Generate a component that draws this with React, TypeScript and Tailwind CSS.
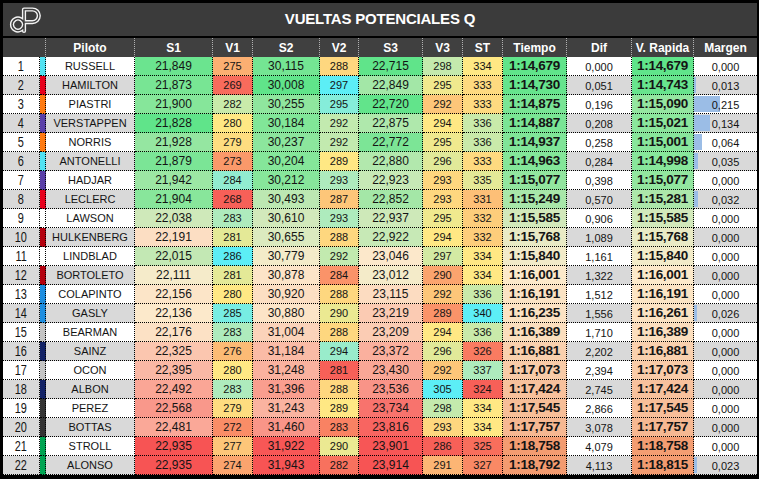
import React from 'react';

type RGB = [number, number, number];

const GREEN: RGB = [96, 228, 138];
const CREAM: RGB = [252, 235, 205];
const RED: RGB = [247, 84, 84];
const ORANGE: RGB = [243, 155, 112];
const SRED: RGB = [247, 96, 88];
const YELLOW: RGB = [255, 232, 132];
const CYAN: RGB = [92, 238, 246];

const TEAM: Record<string, string> = {
    mercedes: '#52e2f2',
    ferrari: '#e8001c',
    mclaren: '#ff7a12',
    redbull: '#5a3fa8',
    rb: '#ffffff',
    audi: '#b4000e',
    alpine: '#1e8ee0',
    haas: '#c4c4c4',
    williams: '#122266',
    cadillac: '#333333',
    aston: '#00a552',
};

// piloto, equipo, S1, V1, S2, V2, S3, V3, ST, tiempo, dif, v.rapida, margen
const ROWS: [string, string, string, number, string, number, string, number, number, string, string, string, string][] = [
    ['RUSSELL', 'mercedes', '21,849', 275, '30,115', 288, '22,715', 298, 334, '1:14,679', '0,000', '1:14,679', '0,000'],
    ['HAMILTON', 'ferrari', '21,873', 269, '30,008', 297, '22,849', 295, 333, '1:14,730', '0,051', '1:14,743', '0,013'],
    ['PIASTRI', 'mclaren', '21,900', 282, '30,255', 295, '22,720', 292, 333, '1:14,875', '0,196', '1:15,090', '0,215'],
    ['VERSTAPPEN', 'redbull', '21,828', 280, '30,184', 292, '22,875', 294, 336, '1:14,887', '0,208', '1:15,021', '0,134'],
    ['NORRIS', 'mclaren', '21,928', 279, '30,237', 292, '22,772', 295, 336, '1:14,937', '0,258', '1:15,001', '0,064'],
    ['ANTONELLI', 'mercedes', '21,879', 273, '30,204', 289, '22,880', 296, 333, '1:14,963', '0,284', '1:14,998', '0,035'],
    ['HADJAR', 'redbull', '21,942', 284, '30,212', 293, '22,923', 293, 335, '1:15,077', '0,398', '1:15,077', '0,000'],
    ['LECLERC', 'ferrari', '21,904', 268, '30,493', 287, '22,852', 293, 331, '1:15,249', '0,570', '1:15,281', '0,032'],
    ['LAWSON', 'rb', '22,038', 283, '30,610', 293, '22,937', 295, 332, '1:15,585', '0,906', '1:15,585', '0,000'],
    ['HULKENBERG', 'audi', '22,191', 281, '30,655', 288, '22,922', 294, 332, '1:15,768', '1,089', '1:15,768', '0,000'],
    ['LINDBLAD', 'rb', '22,015', 286, '30,779', 292, '23,046', 297, 334, '1:15,840', '1,161', '1:15,840', '0,000'],
    ['BORTOLETO', 'audi', '22,111', 281, '30,878', 284, '23,012', 290, 334, '1:16,001', '1,322', '1:16,001', '0,000'],
    ['COLAPINTO', 'alpine', '22,156', 280, '30,920', 288, '23,115', 292, 336, '1:16,191', '1,512', '1:16,191', '0,000'],
    ['GASLY', 'alpine', '22,136', 285, '30,880', 290, '23,219', 289, 340, '1:16,235', '1,556', '1:16,261', '0,026'],
    ['BEARMAN', 'haas', '22,176', 283, '31,004', 288, '23,209', 294, 336, '1:16,389', '1,710', '1:16,389', '0,000'],
    ['SAINZ', 'williams', '22,325', 276, '31,184', 294, '23,372', 296, 326, '1:16,881', '2,202', '1:16,881', '0,000'],
    ['OCON', 'haas', '22,395', 280, '31,248', 281, '23,430', 292, 337, '1:17,073', '2,394', '1:17,073', '0,000'],
    ['ALBON', 'williams', '22,492', 283, '31,396', 288, '23,536', 305, 324, '1:17,424', '2,745', '1:17,424', '0,000'],
    ['PEREZ', 'cadillac', '22,568', 279, '31,243', 289, '23,734', 298, 334, '1:17,545', '2,866', '1:17,545', '0,000'],
    ['BOTTAS', 'cadillac', '22,481', 272, '31,460', 283, '23,816', 293, 334, '1:17,757', '3,078', '1:17,757', '0,000'],
    ['STROLL', 'aston', '22,935', 277, '31,922', 290, '23,901', 286, 325, '1:18,758', '4,079', '1:18,758', '0,000'],
    ['ALONSO', 'aston', '22,935', 274, '31,943', 282, '23,914', 291, 327, '1:18,792', '4,113', '1:18,815', '0,023'],
];

const num = (s: string) => {
    const [a, b] = s.includes(':') ? s.split(':') : ['0', s];
    return Number(a) * 60 + Number(b.replace(',', '.'));
};

const mix = (a: RGB, b: RGB, t: number) => {
    const c = a.map((v, i) => Math.round(v + (b[i] - v) * Math.max(0, Math.min(1, t))));
    return `rgb(${c[0]}, ${c[1]}, ${c[2]})`;
};

const median = (vals: number[]) => {
    const s = [...vals].sort((x, y) => x - y);
    const p = (s.length - 1) / 2;
    const lo = Math.floor(p);
    return s[lo] + (s[Math.ceil(p)] - s[lo]) * (p - lo);
};

function makeScale(vals: number[], c0: RGB, c1: RGB, c2: RGB) {
    const min = Math.min(...vals);
    const max = Math.max(...vals);
    const mid = median(vals);
    return (v: number) => (v <= mid ? mix(c0, c1, (v - min) / (mid - min || 1)) : mix(c1, c2, (v - mid) / (max - mid || 1)));
}

const col = (i: number) => ROWS.map((r) => (typeof r[i] === 'number' ? (r[i] as number) : num(r[i] as string)));

const scales = {
    s1: makeScale(col(2), GREEN, CREAM, RED),
    v1: makeScale(col(3), SRED, YELLOW, CYAN),
    s2: makeScale(col(4), GREEN, CREAM, RED),
    v2: makeScale(col(5), SRED, YELLOW, CYAN),
    s3: makeScale(col(6), GREEN, CREAM, RED),
    v3: makeScale(col(7), SRED, YELLOW, CYAN),
    st: makeScale(col(8), SRED, YELLOW, CYAN),
    tiempo: makeScale(col(9), GREEN, CREAM, ORANGE),
    rapida: makeScale(col(11), GREEN, CREAM, ORANGE),
};

const maxMargen = Math.max(...col(12));

const GRID = 'grid grid-cols-[37px_6px_89px_78px_40px_67px_39px_64px_40px_40px_64px_65px_62px_63px]';
const CELL = 'h-[19px] flex items-center justify-center border-r border-b border-dotted border-black text-[#141414] overflow-hidden';

function Logo() {
    // "dP" monogram, double white outline
    const shape = 'M21 28 V6.5 H29.5 A6.3 6.3 0 0 1 29.5 19.1 H21 M21 21.5 A6 6 0 1 0 21 21.6';
    return (
        <svg width="44" height="33" viewBox="0 0 44 33" className="shrink-0">
            <path d={shape} fill="none" stroke="#f4f4f4" strokeWidth="4.2" strokeLinecap="round" strokeLinejoin="round" />
            <path d={shape} fill="none" stroke="#3b3b3b" strokeWidth="1.4" strokeLinecap="round" strokeLinejoin="round" />
        </svg>
    );
}

const HEADERS = ['Piloto', 'S1', 'V1', 'S2', 'V2', 'S3', 'V3', 'ST', 'Tiempo', 'Dif', 'V. Rapida', 'Margen'];

export default function App() {
    return (
        <div className="w-[759px] h-[479px] bg-black pt-[3px] pl-[3px] pr-[2px] pb-[4px] font-['Liberation_Sans',Arial,sans-serif]">
            <div className="h-[33px] bg-[#3b3b3b] grid grid-cols-[60px_1fr_60px] items-center">
                <Logo />
                <h1 className="text-center text-white font-bold text-[15px] tracking-[-0.2px]">VUELTAS POTENCIALES Q</h1>
                <div />
            </div>

            <div className={`${GRID} mt-[2px] bg-[#404040]`}>
                <div className="col-span-2 h-[19px] border-r border-dotted border-white/60" />
                {HEADERS.map((h) => (
                    <div key={h} className="h-[19px] flex items-center justify-center border-r border-dotted border-white/60 last:border-r-0 text-white font-bold text-[12px]">
                        {h}
                    </div>
                ))}
            </div>

            <div className={GRID}>
                {ROWS.map((r, i) => {
                    const bg = i % 2 === 0 ? 'bg-white' : 'bg-[#d9d9d9]';
                    const margen = num(r[12]);
                    return (
                        <React.Fragment key={r[0]}>
                            <div className={`${CELL} ${bg}`}>
                                <span className="inline-block scale-x-[0.78] text-[14px] leading-none">{i + 1}</span>
                            </div>
                            <div className={`${CELL}`} style={{ backgroundColor: TEAM[r[1]] }} />
                            <div className={`${CELL} ${bg} text-[11px]`}>{r[0]}</div>
                            <div className={`${CELL} text-[12px]`} style={{ backgroundColor: scales.s1(num(r[2])) }}>{r[2]}</div>
                            <div className={`${CELL} text-[11px] pt-px`} style={{ backgroundColor: scales.v1(r[3]) }}>{r[3]}</div>
                            <div className={`${CELL} text-[12px]`} style={{ backgroundColor: scales.s2(num(r[4])) }}>{r[4]}</div>
                            <div className={`${CELL} text-[11px] pt-px`} style={{ backgroundColor: scales.v2(r[5]) }}>{r[5]}</div>
                            <div className={`${CELL} text-[12px]`} style={{ backgroundColor: scales.s3(num(r[6])) }}>{r[6]}</div>
                            <div className={`${CELL} text-[11px] pt-px`} style={{ backgroundColor: scales.v3(r[7]) }}>{r[7]}</div>
                            <div className={`${CELL} text-[11px] pt-px`} style={{ backgroundColor: scales.st(r[8]) }}>{r[8]}</div>
                            <div className={`${CELL} text-[13.5px] font-bold tracking-[-0.3px]`} style={{ backgroundColor: scales.tiempo(num(r[9])) }}>{r[9]}</div>
                            <div className={`${CELL} ${bg} text-[11px] pt-[2px]`}>{r[10]}</div>
                            <div className={`${CELL} text-[13.5px] font-bold tracking-[-0.3px]`} style={{ backgroundColor: scales.rapida(num(r[11])) }}>{r[11]}</div>
                            <div className={`${CELL} ${bg} relative text-[11px] pt-[2px] border-r-0`}>
                                {margen > 0 && (
                                    <div
                                        className="absolute left-0 top-px bottom-px bg-[#9bbde6]"
                                        style={{ width: `${(margen / maxMargen) * 26}px` }}
                                    />
                                )}
                                <span className="relative">{r[12]}</span>
                            </div>
                        </React.Fragment>
                    );
                })}
            </div>
        </div>
    );
}
